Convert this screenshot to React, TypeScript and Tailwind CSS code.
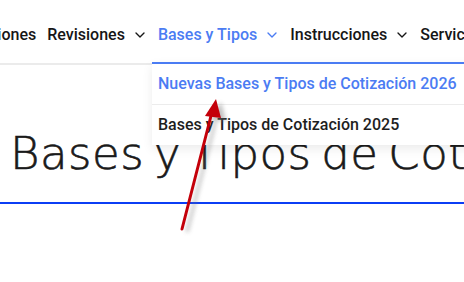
import { ChevronDown } from "lucide-react";

const navFont = { fontFamily: "Roboto, 'Liberation Sans', sans-serif" };

type NavItem = { label: string; active?: boolean; caret?: boolean };

const navItems: NavItem[] = [
  { label: "Revisiones", caret: true },
  { label: "Bases y Tipos", active: true, caret: true },
  { label: "Instrucciones", caret: true },
  { label: "Servicios" },
];

function Arrow() {
  return (
    <svg
      className="pointer-events-none absolute left-0 top-0"
      width="464"
      height="282"
      viewBox="0 0 464 282"
    >
      <defs>
        <filter id="arrow-shadow" x="-50%" y="-50%" width="200%" height="200%">
          <feGaussianBlur stdDeviation="2" />
        </filter>
      </defs>
      <g transform="translate(5 3)" filter="url(#arrow-shadow)" opacity="0.45">
        <line x1="182" y1="229" x2="212" y2="112" stroke="#777" strokeWidth="3" />
        <polygon points="216,99 205,116 221,118" fill="#777" />
      </g>
      <line x1="182" y1="229" x2="212" y2="112" stroke="#c4000a" strokeWidth="3" strokeLinecap="round" />
      <polygon points="216,99 205,116 221,118" fill="#c4000a" />
    </svg>
  );
}

export default function App() {
  return (
    <div className="relative h-[282px] w-[464px] overflow-hidden bg-white">
      <header
        className="flex h-[65px] items-center overflow-hidden whitespace-nowrap border-b-2 border-[#ebebeb] pt-[6px] text-[16px] font-medium text-[#161616]"
        style={navFont}
      >
        <span className="ml-[-11px]">ciones</span>
        {navItems.map((item, i) => (
          <span key={item.label} className={`${i === 0 ? "ml-[11px]" : "ml-[10px]"} flex items-center`}>
            <span className={item.active ? "text-[#4b7cf3]" : ""}>{item.label}</span>
            {item.caret ? (
              <ChevronDown
                size={16}
                strokeWidth={2}
                className={`ml-[7px] ${item.active ? "text-[#4b7cf3]" : "text-[#161616]"}`}
              />
            ) : null}
          </span>
        ))}
      </header>

      <div
        className="absolute left-[152px] top-[62px] w-[330px] border-t-2 border-[#4b7cf3] bg-white text-[16px] font-medium shadow-[0_4px_10px_rgba(0,0,0,0.08)]"
        style={navFont}
      >
        <div className="flex h-[40px] items-center pl-[6px] text-[#4b7cf3]">
          Nuevas Bases y Tipos de Cotización 2026
        </div>
        <div className="flex h-[41px] items-center border-t border-[#ececec] pl-[6px] text-[#1e1e1e]">
          Bases y Tipos de Cotización 2025
        </div>
      </div>

      <div className="border-b-2 border-[#0b3df5] pb-[26px] pt-[66px]">
        <h1
          className="whitespace-nowrap pl-[10px] text-[45px] font-extralight leading-none tracking-[0.5px] text-[#1a1a1a] [-webkit-text-stroke:0.6px_#1a1a1a] [word-spacing:-5px]"
          style={{ fontFamily: "'DejaVu Sans', sans-serif" }}
        >
          Bases y Tipos de Cotización
        </h1>
      </div>

      <Arrow />
    </div>
  );
}
